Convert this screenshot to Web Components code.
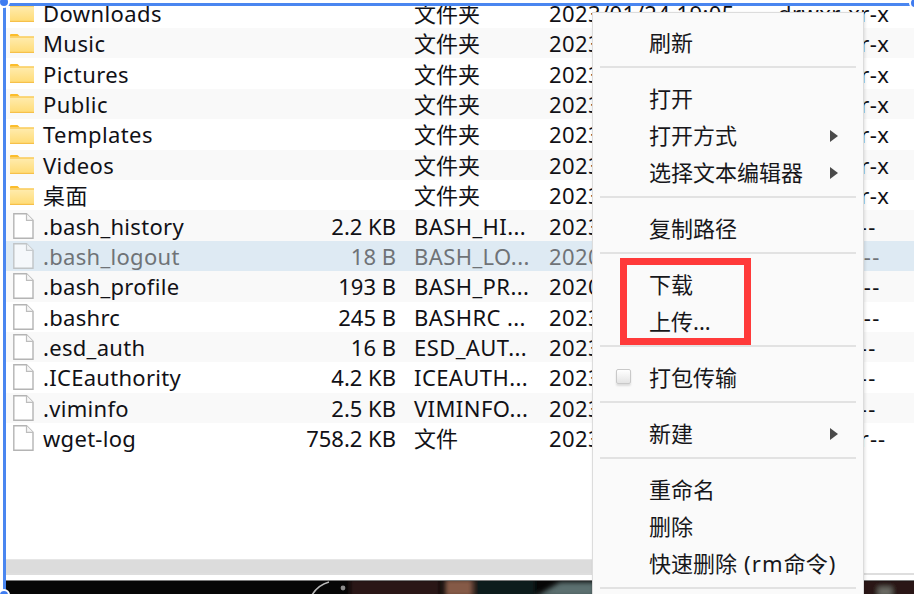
<!DOCTYPE html>
<html><head><meta charset="utf-8">
<style>
html,body{margin:0;padding:0;background:#fff;overflow:hidden}
body{width:914px;height:594px;font-family:"Noto Sans","Noto Sans CJK SC",sans-serif}
</style></head><body>
<file-window></file-window>
<script>
const FONT='"Noto Sans","Noto Sans CJK SC",sans-serif';
const FOLDER=`<svg width="24" height="19" viewBox="0 0 24 19"><defs><linearGradient id="g" x1="0" y1="0" x2="0" y2="1"><stop offset="0" stop-color="#ffecb0"/><stop offset="1" stop-color="#ffdb74"/></linearGradient></defs><path d="M0 1Q0 0 1 0H7.5L10 2.6H0Z" fill="#fbbd2c"/><path d="M0 2.6H24V18.2Q24 19 23.2 19H.8Q0 19 0 18.2Z" fill="url(#g)"/><path d="M0 3H24" stroke="#f9c445" stroke-width="1.2"/><path d="M0 18.4H24" stroke="#f6c04a" stroke-width="1.2"/></svg>`;
const FILE=`<svg width="21" height="26" viewBox="0 0 21 26"><path d="M.8 .8H13.5L20 7.3V25.2H.8Z" fill="#fff" stroke="#b4b4b4" stroke-width="1.4"/><path d="M13.5 .8V7.3H20" fill="#f6f6f6" stroke="#bdbdbd" stroke-width="1.2"/></svg>`;
class FileRow extends HTMLElement{
  connectedCallback(){
    const a=k=>this.getAttribute(k)||'';
    const sel=this.hasAttribute('sel'), dir=a('type')==='d';
    const esc=t=>/[^\x00-\x7f]/.test(t)?'':'class="l"';
    const perm=a('perm');
    const pls=perm[0]==='d'?.42:perm==='-rw-rw-r--'?1.1:1.6;
    this.attachShadow({mode:'open'}).innerHTML=`<style>
    :host{display:grid;grid-template-columns:38px 371px 135px 229px 1fr;height:30.4px;align-items:center;white-space:nowrap;font:22px/30px ${FONT};color:${sel?'#6f7377':'#111116'};background:${sel?'#deeaf3':this.hasAttribute('alt')?'#f9f9f9':'#fff'}}
    .i{display:flex;box-sizing:border-box;padding-left:${dir?5:8}px;${sel?'opacity:.7':''}}
    .n{display:flex;justify-content:space-between;padding-right:18px}
    .l{letter-spacing:.42px}
    .nm{letter-spacing:.3px}
    .z{letter-spacing:0}
    </style>
    <div class="i">${dir?FOLDER:FILE}</div>
    <span class="n"><span class="${dir?'l':'nm'}">${a('name')}</span><span class="z">${a('size')}</span></span>
    <span ${esc(a('kind'))}>${a('kind')}</span><span class="l">${a('date')}</span><span style="letter-spacing:${pls}px">${perm}</span>`;
  }
}
customElements.define('file-row',FileRow);
class MenuItem extends HTMLElement{
  connectedCallback(){
    this.attachShadow({mode:'open'}).innerHTML=`<style>
    :host{display:flex;align-items:center;height:37px;padding-left:56px;position:relative;font:22px/30px ${FONT};color:#17171a;white-space:nowrap}
    .arrow{position:absolute;left:237px;top:14px;width:0;height:0;border-left:8px solid #4a4a4a;border-top:6px solid transparent;border-bottom:6px solid transparent}
    .check{position:absolute;left:23px;top:11px;width:15px;height:15px;box-sizing:border-box;border:1px solid #c9c9c9;border-radius:2px;background:linear-gradient(#fff,#e4e4e4);box-shadow:0 2px 2px #ddd}
    </style>${this.hasAttribute('check')?'<i class="check"></i>':''}<slot></slot>${this.hasAttribute('sub')?'<i class="arrow"></i>':''}`;
  }
}
customElements.define('menu-item',MenuItem);
class MenuSep extends HTMLElement{
  constructor(){super();this.attachShadow({mode:'open'}).innerHTML=`<style>:host{display:block;height:2px;margin:6px 7px 11px;background:#e2e2e2}</style>`}
}
customElements.define('menu-sep',MenuSep);
class ContextMenu extends HTMLElement{
  constructor(){super();this.attachShadow({mode:'open'}).innerHTML=`<style>:host{position:absolute;left:592px;top:12px;width:272px;height:600px;box-sizing:border-box;background:#fafafa;border:1px solid #dcdcdc;box-shadow:1px 1px 3px rgba(0,0,0,.12);padding-top:10px}</style><slot></slot>`}
}
customElements.define('context-menu',ContextMenu);
class FileWindow extends HTMLElement{
  constructor(){super();
    const D='2023/01/24 19:05',O='2020/04/01 10:17';
    const rows=[['d','Downloads','','文件夹',D,'drwxr-xr-x'],['d','Music','','文件夹',D,'drwxr-xr-x'],['d','Pictures','','文件夹',D,'drwxr-xr-x'],['d','Public','','文件夹',D,'drwxr-xr-x'],['d','Templates','','文件夹',D,'drwxr-xr-x'],['d','Videos','','文件夹',D,'drwxr-xr-x'],['d','桌面','','文件夹',D,'drwxr-xr-x'],['f','.bash_history','2.2 KB','BASH_HI...',D,'-rw-------'],['f','.bash_logout','18 B','BASH_LO...',O,'-rw-r--r--'],['f','.bash_profile','193 B','BASH_PR...',O,'-rw-r--r--'],['f','.bashrc','245 B','BASHRC ...',D,'-rw-r--r--'],['f','.esd_auth','16 B','ESD_AUT...',D,'-rw-------'],['f','.ICEauthority','4.2 KB','ICEAUTH...',D,'-rw-------'],['f','.viminfo','2.5 KB','VIMINFO...',D,'-rw-------'],['f','wget-log','758.2 KB','文件',D,'-rw-rw-r--']];
    const html=rows.map((x,i)=>`<file-row type="${x[0]}" name="${x[1]}" size="${x[2]}" kind="${x[3]}" date="${x[4]}" perm="${x[5]}" ${i%2?'alt':''} ${i==8?'sel':''}></file-row>`).join('');
    const menu=`<context-menu><menu-item>刷新</menu-item><menu-sep></menu-sep><menu-item>打开</menu-item><menu-item sub>打开方式</menu-item><menu-item sub>选择文本编辑器</menu-item><menu-sep></menu-sep><menu-item>复制路径</menu-item><menu-sep></menu-sep><menu-item>下载</menu-item><menu-item>上传...</menu-item><menu-sep></menu-sep><menu-item check>打包传输</menu-item><menu-sep></menu-sep><menu-item sub>新建</menu-item><menu-sep></menu-sep><menu-item>重命名</menu-item><menu-item>删除</menu-item><menu-item><span>快速删除<span style="letter-spacing:1.2px;white-space:pre"> (rm</span>命令<span style="margin-left:1px">)</span></span></menu-item><menu-sep></menu-sep></context-menu>`;
    this.attachShadow({mode:'open'}).innerHTML=`<style>
    :host{display:flex;flex-direction:column;position:relative;width:914px;height:594px;overflow:hidden;background:#fff}
    .list{height:559px;overflow:hidden;flex:none;padding-left:5px}
    .in{margin-top:-2.4px}
    .bar{height:14px;background:#dcdcdc;border-top:1px solid #e6e6e6;margin:0 200px 0 5px;flex:none;box-sizing:border-box}
    .gap{height:7px;background:#fff;margin-left:5px;border-top:2px solid #dedede;flex:none;box-sizing:border-box}
    .photo{flex:1;margin-left:5px;border-top:1px solid #7a7a7a;overflow:hidden;background:#060606}
    .photo svg{display:block}
    .frame{position:absolute;left:3px;top:3px;right:0;bottom:0;border-left:3px solid #4a86f0;border-top:3px solid #4a86f0;pointer-events:none}
    .h{position:absolute;width:8px;height:8px;border-radius:50%;background:#3f7cf0;border:2px solid #fff}
    .box{position:absolute;left:620px;top:258px;width:131px;height:87px;box-sizing:border-box;border:7px solid #ff3a3a}
    </style>
    <div class="list"><div class="in">${html}</div></div><div class="bar"></div><div class="gap"></div>
    <div class="photo"><svg width="909" height="14" viewBox="5 580 909 14">
      <defs><filter id="b"><feGaussianBlur stdDeviation="2.5"/></filter></defs>
      <g filter="url(#b)">
      <rect x="350" y="578" width="90" height="18" fill="#2c1612"/>
      <rect x="445" y="578" width="28" height="18" fill="#855a46"/>
      <rect x="475" y="578" width="60" height="18" fill="#0d1a1c"/>
      <path d="M535 596L560 581H595V596Z" fill="#5c7070"/>
      <rect x="860" y="578" width="60" height="18" fill="#2a1812"/>
      <rect x="878" y="586" width="14" height="10" fill="#6a6a64"/>
      </g>
      <path d="M312 594Q318 584 329 581" fill="none" stroke="#b8b8b8" stroke-width="1.6"/>
      <circle cx="343" cy="587" r="2.4" fill="#8c8c8c"/>
    </svg></div>
    ${menu}<div class="box"></div><div class="frame"></div><i class="h" style="left:-2px;top:-4px"></i><i class="h" style="left:-2px;top:589px"></i><i class="h" style="left:909px;top:-3px"></i>`;
  }
}
customElements.define('file-window',FileWindow);
</script>
</body></html>
